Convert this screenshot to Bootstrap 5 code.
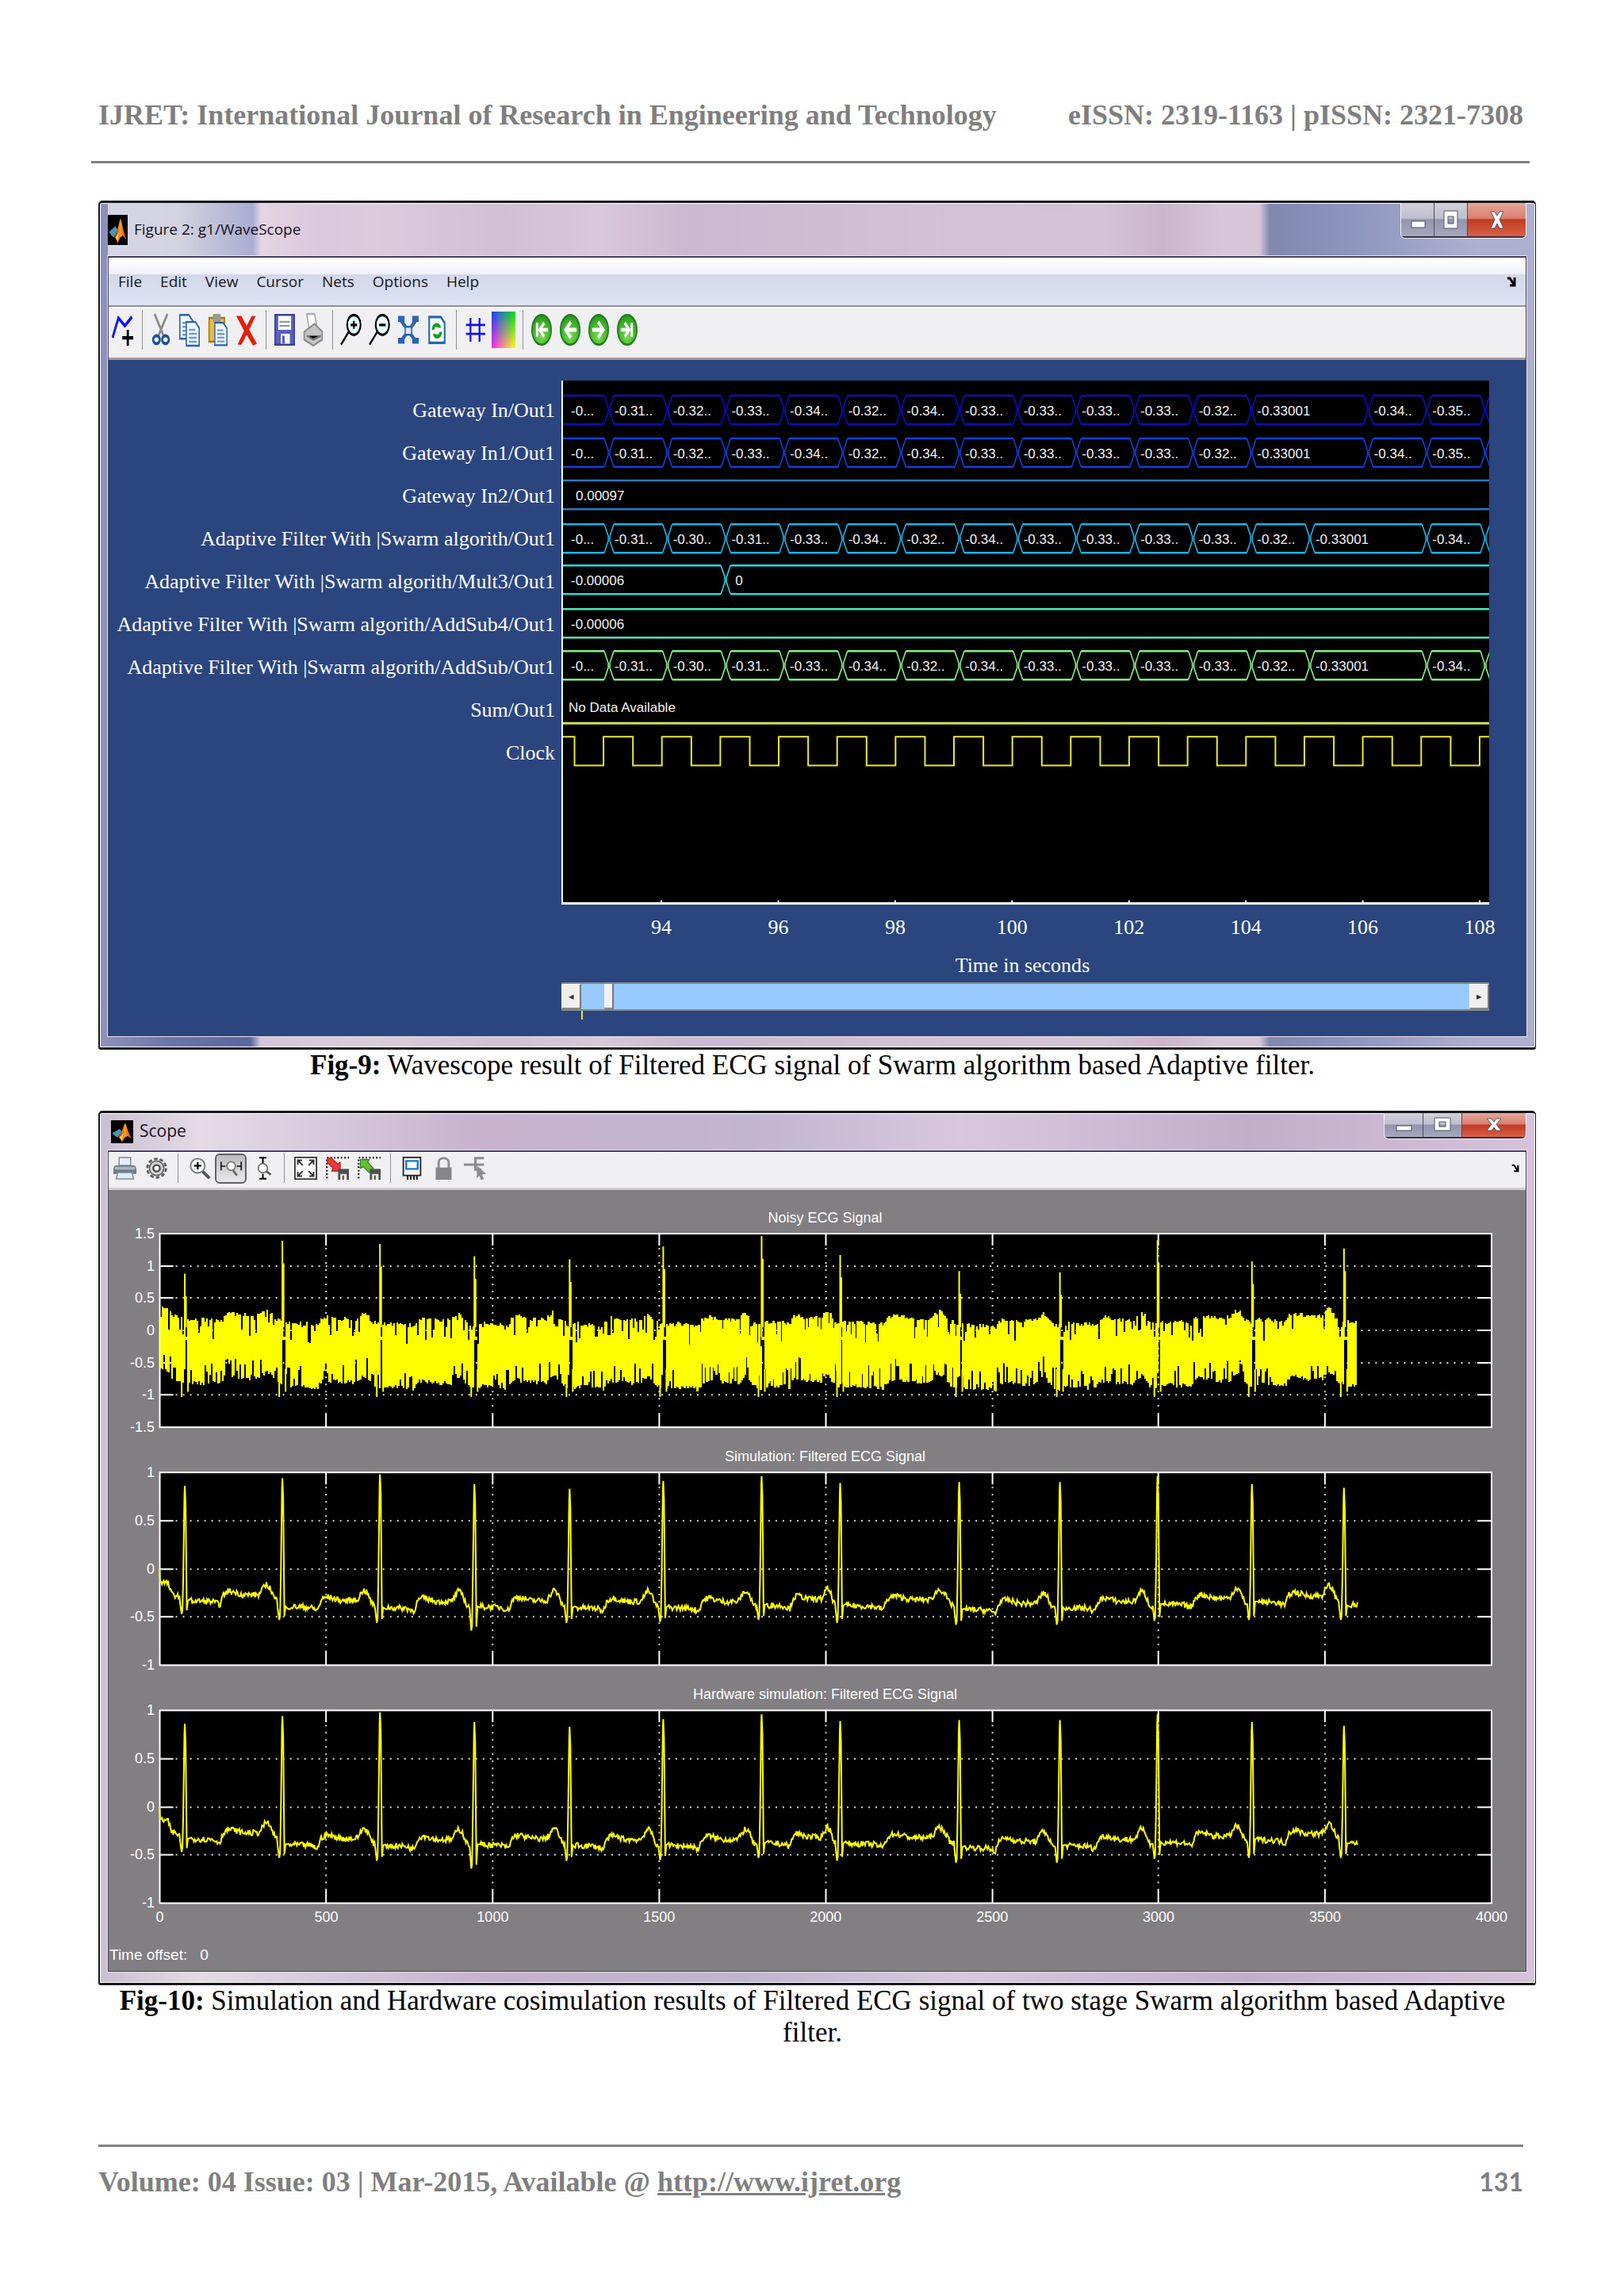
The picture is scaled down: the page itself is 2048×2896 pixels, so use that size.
<!DOCTYPE html>
<html lang="en">
<head>
<meta charset="utf-8">
<meta name="viewport" content="width=device-width, initial-scale=1">
<title>IJRET: International Journal of Research in Engineering and Technology</title>
<link href="https://cdn.jsdelivr.net/npm/bootstrap@5.3.0/dist/css/bootstrap.min.css" rel="stylesheet">
<style>
:root{--ui:"Open Sans",sans-serif}
body{background:#fff;color:#000;font-family:"Liberation Serif",serif}
.sheet{padding:125px 111px 0 124px}
.run-head{font-size:36px;line-height:40px;color:#7f7f7f;font-weight:700;padding-right:16px}
.head-rule{height:3px;background:#808080;margin:38px 8px 47px -9px}
.foot-rule{height:3px;background:#808080;margin:121px 16px 0 0}
.run-foot a{color:#7f7f7f}
.page-no{font-family:Lato,sans-serif;font-size:32px}
.caption{font-size:35px;line-height:40px;text-align:center;padding-right:12px}
.fig-gap{padding-top:37px}
.win{border:solid #15151c;border-width:3px 1px 3px 2px;border-radius:5px 5px 3px 3px;padding:0 11px 14px 10px;box-shadow:inset 0 0 0 1px #fff}
.win-wave{background:linear-gradient(90deg,#8d93bb 0,#6a74a8 5%,#5a68a0 10.5%,#d8c5dc 11.2%,#dccadd 19%,#d2bfd4 28%,#d9c7dc 35%,#ccb8d0 41%,#d4c1d7 60%,#d5c2d7 70%,#cbb5cc 74%,#d8c5da 78%,#d8c5da 80.8%,#8088b0 81.5%,#8b95bd 87%,#aeb0d2 96%)}
.win-scope{background:linear-gradient(90deg,#c9bfd2 0,#e4dbe6 7%,#d5c6db 17%,#c7b1cd 27%,#c0b5cf 45%,#d9c7df 60%,#c3aeca 80%,#d7c2dc 100%)}
.win-title{font-family:var(--ui);color:#16121c}
.win-wave .win-title{height:67px;font-size:19px;background:linear-gradient(90deg,#d4d5e5 0,#d4d3e2 5%,#a9add0 10.2%,#e4d6e4 10.8%,transparent 15%)}
.win-scope .win-title{height:47px;font-size:21px}
.win-buttons{align-self:flex-start;border:1px solid #f3f1f7;border-top:0;border-radius:0 0 6px 6px;overflow:hidden}
.win-buttons button{border:0;border-right:1px solid #4a4a5c;padding:0;background:linear-gradient(#d3d0dc 0,#c0bfce 46%,#9395ad 50%,#a7a8c0 100%);border-bottom:2px solid #30303f}
.win-buttons .btn-x{background:linear-gradient(#e5a79b 0,#da7f70 46%,#c23a24 50%,#d96046 100%);border-right:0}
.win-wave .win-buttons button{width:42px;height:44px}.win-wave .win-buttons .btn-x{width:73px}
.win-scope .win-buttons button{width:49px;height:32px}.win-scope .win-buttons .btn-x{width:80px}
.win-body{border:1px solid #46405c;border-top-width:2px;box-shadow:0 0 0 1px #e6e0ee}
.menu-row{height:62px;padding:0 12px;border-bottom:2px solid #90909c;background:linear-gradient(#fff 0,#f0f1fa 34%,#d3d9ea 36%,#dde2f4 100%);font-family:var(--ui);font-size:19px}
.menu-row button{border:0;background:none;padding:0;color:#16161c}
.menu-items{gap:23px}
.tool-row{background:#f0eff1}
.tool-row button{border:0;background:none;padding:0;display:flex;align-items:center;justify-content:center}
.tool-row i{width:1px;background:#8f8f8f;align-self:center}
.tools-a{height:67px;padding-bottom:8px;border-bottom:3px solid #a49b9b;border-top:2px solid #fff}
.tools-a button{width:36px}.tools-a svg{width:26px;height:40px}.tools-a i{height:50px;margin:0 5px 0 6px}
.tools-b{height:48px;padding-bottom:4px;border-bottom:3px solid #cfcfcf;border-top:1px solid #fff}
.tools-b button{width:40px;height:38px}.tools-b svg{width:29px;height:29px}.tools-b i{height:37px;margin:0 6px 0 7px}
.tools-b .pressed{border:2px solid #606068;border-radius:6px;background:linear-gradient(#bdbdc0,#e8e8ea)}
.tools-b .dock{width:26px}.tools-b .dock svg{width:12px;height:11px}
.tools-a .swatch{width:30px;height:46px}
.wave-area{background:#2b457f;color:#fff;padding:26px 46px 20px 0}
.net-names{font-size:26px;line-height:54px;text-align:right;padding:11px 8px 0 0;min-width:0;white-space:nowrap}
.wave-col{width:67.2%;flex:none}
svg{display:block;overflow:visible}
.wave-col svg,.scope-area>svg{width:100%;height:auto}
.time-scroll{height:36px;border-top:2px solid #7d8790;border-bottom:2px solid #7d8790;background:#99caff}
.time-scroll button{width:25px;border:1px solid #fff;border-right:2px solid #777;border-bottom:2px solid #888;background:#efefef;padding:0;font-size:13px;line-height:1;color:#333}
.time-scroll input{appearance:none;background:none;margin:0;min-width:0;height:32px}
.time-scroll input::-webkit-slider-thumb{appearance:none;width:12px;height:32px;background:#f2f2f2;border-right:2px solid #777;border-bottom:2px solid #888}
.scroll-mark{width:2px;height:11px;background:#e8e832;margin-left:25px}
.scope-area{background:#827f82;color:#fff;padding:0}
.scope-note{font-family:"Liberation Sans",sans-serif;font-size:19px;line-height:24px;padding:0 0 8px 1px}
.scope-note span{margin-left:16px}
</style>
<script src="https://cdn.jsdelivr.net/npm/bootstrap@5.3.0/dist/js/bootstrap.bundle.min.js"></script>
</head>
<body>
<svg width="0" height="0" class="position-absolute" aria-hidden="true">
<defs>
<radialGradient id="ball" cx=".5" cy=".7" r=".7"><stop offset="0" stop-color="#7be050"/><stop offset="1" stop-color="#23941c"/></radialGradient>
<linearGradient id="rain" x1="0" x2="1"><stop offset="0" stop-color="#1a3fff"/><stop offset=".4" stop-color="#2080b0"/><stop offset="1" stop-color="#00e010"/></linearGradient>
<linearGradient id="warm" x1="0" x2="1"><stop offset="0" stop-color="#ff20f0"/><stop offset="1" stop-color="#ffff20"/></linearGradient>
<linearGradient id="fade" x1="0" x2="0" y1="0" y2="1"><stop offset="0" stop-color="#fff" stop-opacity="0"/><stop offset="1" stop-color="#fff"/></linearGradient>
<mask id="low"><rect width="16" height="16" fill="url(#fade)"/></mask>
<linearGradient id="flame" x1="0" x2="1"><stop offset="0" stop-color="#7a2010"/><stop offset=".5" stop-color="#ff9a2a"/><stop offset="1" stop-color="#c84010"/></linearGradient>
<symbol id="matlab" viewBox="0 0 16 16" preserveAspectRatio="none"><path fill="#000" d="M0 0h16v16H0z"/><path fill="#3f9ab5" d="M1 9l5-3 2 2-3 4-2-1z"/><path fill="url(#flame)" d="M5 12l3-5 2-5c1 0 2 6 5 11l-3-2-2 1-2 3c-1 0-1-3-3-3z"/><path fill="#ffd23a" d="M6 12l3-3-1 5z"/></symbol>
<symbol id="page" viewBox="0 0 16 16"><path fill="#f4f9ff" stroke="#2a62ae" d="M.5.5h7l3 3v9H.5z"/><path stroke="#6a9bd2" d="M2.500 4.500h5M2.500 6.500h6M2.500 8.500h6M2.500 10.500h6"/></symbol>
</defs></svg>

<div class="sheet">
<header>
<div class="run-head d-flex justify-content-between"><span>IJRET: International Journal of Research in Engineering and Technology</span><span>eISSN: 2319-1163 | pISSN: 2321-7308</span></div>
<div class="head-rule"></div>
</header>

<main>
<figure class="mb-0">
<section class="win win-wave">
<div class="win-title d-flex align-items-center">
<svg width="25" height="38"><use href="#matlab"/></svg><span class="ms-2">Figure 2: g1/WaveScope</span>
<div class="win-buttons d-flex ms-auto">
<button aria-label="Minimize"><svg width="42" height="42"><rect x="13" y="23" width="17" height="8" fill="#fff" stroke="#555566"/></svg></button>
<button aria-label="Maximize"><svg width="42" height="42"><path fill="#fff" stroke="#555566" fill-rule="evenodd" d="M12 10h17v22H12zM17 17h7v9h-7z"/></svg></button>
<button class="btn-x" aria-label="Close"><svg width="73" height="42"><path fill="#fff" stroke="#555566" d="M29 11h5l3 5 3-5h5l-5 10 5 11h-5l-3-6-3 6h-5l5-11z"/></svg></button>
</div>
</div>
<div class="win-body">
<nav class="menu-row d-flex align-items-center"><div class="menu-items d-flex flex-grow-1"><button>File</button><button>Edit</button><button>View</button><button>Cursor</button><button>Nets</button><button>Options</button><button>Help</button></div>
<button aria-label="Dock"><svg width="12" height="13" viewBox="0 0 12 13"><path fill="none" stroke="#000" stroke-width="3" d="M1 2h3l6 9M10 1v10H4"/></svg></button></nav>
<div class="tool-row tools-a d-flex">
<button aria-label="Add net"><svg viewBox="0 0 16 16" preserveAspectRatio="none"><path fill="none" stroke="#1010ff" stroke-width="1.700" d="M0 12L4.500 2l5 4L15 1.500"/><path stroke="#000" stroke-width="1.700" d="M7.500 12h8.500M11.800 8v8"/></svg></button><i></i>
<button aria-label="Cut"><svg viewBox="0 0 16 16" preserveAspectRatio="none"><path stroke="#8c8c8c" stroke-width="1.600" d="M3 0l7 11M13 0L6 11"/><ellipse cx="4.500" cy="13" rx="2.600" ry="2" fill="none" stroke="#1c4f9e" stroke-width="1.600"/><ellipse cx="11.500" cy="13" rx="2.600" ry="2" fill="none" stroke="#1c4f9e" stroke-width="1.600"/></svg></button>
<button aria-label="Copy"><svg viewBox="0 0 16 16" preserveAspectRatio="none"><use href="#page" width="16" height="16"/><use href="#page" x="5" y="3.500" width="16" height="16"/></svg></button>
<button aria-label="Paste"><svg viewBox="0 0 16 16" preserveAspectRatio="none"><path fill="#e9bd3b" stroke="#a77716" d="M1 2h12v12H1z"/><path fill="#9a9a94" d="M4 0h6v4H4z"/><use href="#page" x="5" y="4" width="15" height="15"/></svg></button>
<button aria-label="Delete"><svg viewBox="0 0 16 16" preserveAspectRatio="none"><path fill="#e3200f" d="M0 1l4-0 4 5 4-5h3l-5 7 6 7-3 1-5-5.500-4 5H1l5-7z"/></svg></button><i></i>
<button aria-label="Save"><svg viewBox="0 0 16 16" preserveAspectRatio="none"><path fill="#5a5fb8" stroke="#38418f" d="M.5.500h15v15H.5z"/><path fill="#fff" d="M3 1h10v7H3zM5 10h7v5H5z"/><path stroke="#999" d="M4 4h8M4 6h8"/><path fill="#5a5fb8" d="M6 11h2v4H6z"/></svg></button>
<button aria-label="Print"><svg viewBox="0 0 16 16" preserveAspectRatio="none"><path fill="#fff" stroke="#aaa" d="M3 0h6l2 7-6 1z"/><path fill="#c5c5c5" stroke="#8b8b8b" d="M1 9l8-4 6 4v4l-7 3-7-3z"/><path stroke="#777" d="M3 11l5 2 6-2"/></svg></button><i></i>
<button aria-label="Zoom in"><svg viewBox="0 0 16 16" preserveAspectRatio="none"><ellipse cx="10" cy="5.500" rx="5.200" ry="5" fill="#e8ffff" stroke="#000" stroke-width="1.300"/><path stroke="#000" stroke-width="1.300" d="M7.500 5.500h5M10 3.500v4M6 9l-6 6.500"/></svg></button>
<button aria-label="Zoom out"><svg viewBox="0 0 16 16" preserveAspectRatio="none"><ellipse cx="10" cy="5.500" rx="5.200" ry="5" fill="#e8ffff" stroke="#000" stroke-width="1.300"/><path stroke="#000" stroke-width="1.300" d="M7.500 5.500h5M6 9l-6 6.500"/></svg></button>
<button aria-label="Fit"><svg viewBox="0 0 16 16" preserveAspectRatio="none"><path stroke="#2d63b0" stroke-width="2.200" d="M2 3l12 11M14 3L2 14"/><path fill="#2d63b0" d="M0 1h5v3H0zM11 1h5v3h-5zM0 12h5v3H0zM11 12h5v3h-5z"/><path fill="#dfeaf8" stroke="#2d63b0" d="M5.500 6.500h5v4h-5z"/></svg></button>
<button aria-label="Refresh"><svg viewBox="0 0 16 16" preserveAspectRatio="none"><path fill="#fff" stroke="#2467b0" stroke-width="1.300" d="M2 1.500h9l3 3v10H2z"/><path fill="none" stroke="#10a020" stroke-width="2" d="M5 8c0-3 5-3 5-1M11 9c0 3-5 3-5 1"/></svg></button><i></i>
<button aria-label="Grid"><svg viewBox="0 0 16 16" preserveAspectRatio="none"><path stroke="#1010f0" stroke-width="1.100" d="M1 5.500h15M1 10h15"/><path stroke="#1010f0" stroke-width="1.400" d="M4.500 2v12M11.500 2v12"/></svg></button>
<button aria-label="Colors"><svg class="swatch" viewBox="0 0 16 16" preserveAspectRatio="none"><path fill="url(#rain)" d="M0 0h16v16H0z"/><path fill="url(#warm)" mask="url(#low)" d="M0 0h16v16H0z"/></svg></button><i></i>
<button aria-label="First"><svg viewBox="0 0 16 16" preserveAspectRatio="none"><ellipse cx="8" cy="8" rx="7.500" ry="7.500" fill="url(#ball)" stroke="#1f7d1a"/><path fill="none" stroke="#fff" stroke-width="1.800" d="M4.500 4.500v7M13 8H7M10 4.500L6.500 8l3.500 3.500"/></svg></button>
<button aria-label="Previous"><svg viewBox="0 0 16 16" preserveAspectRatio="none"><ellipse cx="8" cy="8" rx="7.500" ry="7.500" fill="url(#ball)" stroke="#1f7d1a"/><path fill="none" stroke="#fff" stroke-width="2" d="M13 8H5M8.500 4L4.500 8l4 4"/></svg></button>
<button aria-label="Next"><svg viewBox="0 0 16 16" preserveAspectRatio="none"><ellipse cx="8" cy="8" rx="7.500" ry="7.500" fill="url(#ball)" stroke="#1f7d1a"/><path fill="none" stroke="#fff" stroke-width="2" d="M3 8h8M7.500 4l4 4-4 4"/></svg></button>
<button aria-label="Last"><svg viewBox="0 0 16 16" preserveAspectRatio="none"><ellipse cx="8" cy="8" rx="7.500" ry="7.500" fill="url(#ball)" stroke="#1f7d1a"/><path fill="none" stroke="#fff" stroke-width="1.800" d="M11.500 4.500v7M3 8h6M6 4.500L9.500 8 6 11.500"/></svg></button>
</div>
<div class="wave-area d-flex">
<div class="net-names flex-grow-1"><div>Gateway In/Out1</div><div>Gateway In1/Out1</div><div>Gateway In2/Out1</div><div>Adaptive Filter With |Swarm algorith/Out1</div><div>Adaptive Filter With |Swarm algorith/Mult3/Out1</div><div>Adaptive Filter With |Swarm algorith/AddSub4/Out1</div><div>Adaptive Filter With |Swarm algorith/AddSub/Out1</div><div>Sum/Out1</div><div>Clock</div></div>
<div class="wave-col">
<svg id="waves" viewBox="708 480 1169 758" role="img" aria-label="Wave scope"></svg>
<div class="time-scroll d-flex"><button aria-label="Scroll left">◂</button><input class="flex-grow-1" type="range" min="0" max="1000" value="26" aria-label="Time"><button aria-label="Scroll right">▸</button></div>
<div class="scroll-mark"></div>
</div>
</div>
</div>
</section>
<figcaption class="caption"><b>Fig-9:</b> Wavescope result of Filtered ECG signal of Swarm algorithm based Adaptive filter.</figcaption>
</figure>

<figure class="mb-0 fig-gap">
<section class="win win-scope">
<div class="win-title d-flex align-items-center">
<svg width="28" height="29" class="ms-1"><use href="#matlab"/></svg><span class="ms-2">Scope</span>
<div class="win-buttons d-flex ms-auto">
<button aria-label="Minimize"><svg width="48" height="30"><rect x="15" y="16" width="19" height="6" fill="#fff" stroke="#555566"/></svg></button>
<button aria-label="Maximize"><svg width="48" height="30"><path fill="#fff" stroke="#555566" fill-rule="evenodd" d="M14 6h20v16H14zM20 11h8v6h-8z"/></svg></button>
<button class="btn-x" aria-label="Close"><svg width="80" height="30"><path fill="#fff" stroke="#555566" d="M31 7h6l3 4 3-4h6l-6 7 6 8h-6l-3-4-3 4h-6l6-8z"/></svg></button>
</div>
</div>
<div class="win-body">
<div class="tool-row tools-b d-flex align-items-center">
<button aria-label="Print"><svg viewBox="0 0 16 16"><path fill="#e8eef5" stroke="#7d8b9b" stroke-width=".8" d="M4 .500h8V6H4z"/><path fill="#6f7c8b" d="M1 6h14l1 2v4H0V8z"/><path fill="#aab4bf" d="M1 7h14v2H1z"/><path fill="#e3eefb" stroke="#7d8b9b" stroke-width=".8" d="M3 11h10l1 4.500H2z"/></svg></button>
<button aria-label="Parameters"><svg viewBox="0 0 16 16"><circle cx="8" cy="8" r="6.500" fill="none" stroke="#5e5e5e" stroke-width="1.600" stroke-dasharray="2.500 1.580"/><circle cx="8" cy="8" r="5" fill="#d8d8d8" stroke="#666"/><circle cx="8" cy="8" r="2.300" fill="#fff" stroke="#4a4a4a" stroke-width="1.300"/></svg></button><i></i>
<button aria-label="Zoom"><svg viewBox="0 0 16 16"><path stroke="#555" stroke-width="2.200" d="M10 10l5 5"/><circle cx="6.800" cy="6.300" r="5" fill="#f2f7fa" stroke="#777"/><path stroke="#000" stroke-width="1.300" d="M4.300 6.300h5M6.800 3.800v5"/></svg></button>
<button class="pressed" aria-label="Zoom X-axis"><svg viewBox="0 0 16 16"><path stroke="#666" stroke-width="1.500" d="M9 9l3 4"/><circle cx="8" cy="6.500" r="3" fill="#f6fafc" stroke="#777"/><path fill="none" stroke="#222" d="M1 3.500v6M15 3.500v6M1 6.500h3M15 6.500h-3"/></svg></button>
<button aria-label="Zoom Y-axis"><svg viewBox="0 0 16 16"><path stroke="#555" stroke-width="1.500" d="M9.500 9.500l4 3"/><circle cx="8" cy="8" r="3.200" fill="#f6fafc" stroke="#777"/><path stroke="#000" stroke-width="1.100" d="M5.500.700h5M5.500 15.300h5M8 1v3.500M8 12v3"/></svg></button><i></i>
<button aria-label="Autoscale"><svg viewBox="0 0 16 16"><path fill="#fff" stroke="#333" d="M.5.500h15v15H.5z"/><path fill="none" stroke="#333" stroke-width="1.100" d="M2.500 5.500v-3h3m-3 0l3.500 3.500M13.500 5.500v-3h-3m3 0L10 6M2.500 10.500v3h3m-3 0L6 10M13.500 10.500v3h-3m3 0L10 10"/></svg></button>
<button aria-label="Save axes"><svg viewBox="0 0 16 16"><path fill="none" stroke="#222" stroke-width="1.400" stroke-dasharray="1 1.400" d="M.7 15V.7H16"/><path fill="#ee3838" stroke="#b01818" stroke-width=".6" d="M1 1h3l4 4 2-1v6H4l1-2-4-4z"/><path fill="#4e4e4e" d="M8.500 8.500H16V16H8.500z"/><path fill="#e8e8e8" d="M10 12h4.500v4H10z"/><path fill="#444" d="M11.500 13h1v3h-1z"/></svg></button>
<button aria-label="Restore axes"><svg viewBox="0 0 16 16"><path fill="none" stroke="#222" stroke-width="1.400" stroke-dasharray="1 1.400" d="M.7 15V.7H16"/><path fill="#64c030" stroke="#2e7d12" stroke-width=".6" d="M2 2h6L7 4l4 4-3 3-4-4-2 1z"/><path fill="#4e4e4e" d="M8.500 8.500H16V16H8.500z"/><path fill="#e8e8e8" d="M10 12h4.500v4H10z"/><path fill="#444" d="M11.500 13h1v3h-1z"/></svg></button><i></i>
<button aria-label="Floating scope"><svg viewBox="0 0 16 16"><path fill="#f4f4f4" stroke="#222" d="M2 .500h12v12.500H2z"/><path fill="#fff" stroke="#1879c8" stroke-width="1.300" d="M4 3h8v5.500H4z"/><path stroke="#222" stroke-width="1.200" d="M5 13v3M7.200 13v3M9.400 13v3M11.500 13v3"/></svg></button>
<button aria-label="Lock"><svg viewBox="0 0 16 16"><path fill="none" stroke="#8d8d8d" stroke-width="1.600" d="M4.500 8V4c0-4 7-4 7 0v4"/><path fill="#868686" d="M2.500 7.500h11V16h-11z"/></svg></button>
<button aria-label="Signal selector"><svg viewBox="0 0 16 16"><path fill="none" stroke="#8d8d8d" stroke-width="1.700" d="M0 5.500h14M14 1H8v8h4"/><path fill="#8d8d8d" d="M9 6l6.500 6-3 .5 1.500 3-2 .8-1.300-3L9 15z"/></svg></button>
<button class="dock ms-auto" aria-label="Dock"><svg viewBox="0 0 12 13"><path fill="none" stroke="#000" stroke-width="2.500" d="M1 2h3l6 9M10 2v9H4"/></svg></button>
</div>
<div class="scope-area">
<svg id="scopes" viewBox="137 1502 1786 953" role="img" aria-label="ECG scope"></svg>
<div class="scope-note">Time offset:<span>0</span></div>
</div>
</div>
</section>
<figcaption class="caption"><b>Fig-10:</b> Simulation and Hardware cosimulation results of Filtered ECG signal of two stage Swarm algorithm based Adaptive filter.</figcaption>
</figure>
</main>

<footer>
<div class="foot-rule"></div>
<div class="run-head run-foot d-flex justify-content-between align-items-center pt-4"><span>Volume: 04 Issue: 03 | Mar-2015, Available @ <a href="http://www.ijret.org">http://www.ijret.org</a></span><span class="page-no">131</span></div>
</footer>
</div>

<script>
// ---- wave scope ----
(function(){
  const L=708,R=1877,step=73.6,first=768;
  let s=`<rect x="${L}" y="480" width="${R-L}" height="658" fill="#000"/><clipPath id="wc"><rect x="${L}" y="480" width="${R-L}" height="660"/></clipPath><g clip-path="url(#wc)" fill="none" stroke-width="2.500">`;
  let t='<g fill="#f2f2f2" font-family="Liberation Sans, sans-serif" font-size="17">';
  const a=['-0...','-0.31..','-0.32..','-0.33..','-0.34..','-0.32..','-0.34..','-0.33..','-0.33..','-0.33..','-0.33..','-0.32..','-0.33001',null,'-0.34..','-0.35..',''];
  const b=['-0...','-0.31..','-0.30..','-0.31..','-0.33..','-0.34..','-0.32..','-0.34..','-0.33..','-0.33..','-0.33..','-0.33..','-0.32..','-0.33001',null,'-0.34..',''];
  // index 0 ends at the first crossing; null keeps the former value
  function bus(y,c,vals){
    let x0=L-8;
    vals.forEach((v,i)=>{
      if(v!==null){const tx=i===0?720:first+(i-1)*step+7;t+=`<text x="${tx}" y="${y+25}">${v}</text>`;}
      if(vals[i+1]===null)return;
      const x=first+i*step;
      s+=`<path stroke="${c}" d="M${x0+6} ${y}H${x-6}M${x0+6} ${y+36}H${x-6}"/><path stroke="${c}" stroke-width="1.600" d="M${x-6} ${y}L${x-1} ${y+15}V${y+21}L${x-6} ${y+36}M${x+6} ${y}L${x+1} ${y+15}V${y+21}L${x+6} ${y+36}"/>`;
      x0=x;
    });
  }
  function flat(y,c,v,x){s+=`<path stroke="${c}" d="M${L} ${y}H${R}M${L} ${y+36}H${R}"/>`;t+=`<text x="${x}" y="${y+25}">${v}</text>`;}
  bus(499,'#0c0cc0',a);bus(553,'#1040dc',a);
  flat(606,'#2d78bb','0.00097',726);
  bus(661,'#18b4ea',b);
  s+=`<path stroke="#20dce8" d="M${L} 713H909M921 713H${R}M${L} 749H909M921 749H${R}"/><path stroke="#20dce8" stroke-width="1.600" d="M909 713L914 728V734L909 749M921 713L916 728V734L921 749"/>`;
  t+='<text x="720" y="738">-0.00006</text><text x="927" y="738">0</text>';
  flat(768,'#4ce8bc','-0.00006',720);
  bus(821,'#86f286',b);
  s+=`<path stroke="#cfe64a" stroke-width="3" d="M${L} 912H${R}"/>`;
  t+='<text x="717" y="898">No Data Available</text></g>';
  let d=`M${L} 929`;
  for(let k=0;k<17;k++){const f=724.5+k*step;d+=`H${f}V965H${f+36.500}V929`;}
  s+=`<path stroke="#eaea28" stroke-width="2" d="${d}"/></g>`;
  s+=`<path stroke="#fff" stroke-width="2" fill="none" d="M709 480V1139"/><path stroke="#fff" stroke-width="3" d="M708 1139H1877"/>`;
  let u='<g fill="#fff" text-anchor="middle" font-family="Liberation Serif, serif" font-size="26">';
  for(let i=0;i<8;i++){const x=834+i*147.3;s+=`<path stroke="#fff" stroke-width="2" d="M${x} 1135v4"/>`;u+=`<text x="${x}" y="1177">${94+2*i}</text>`;}
  u+='<text x="1289" y="1225">Time in seconds</text></g>';
  document.getElementById('waves').innerHTML=s+t+u;
})();
// ---- ECG scope ----
(function(){
  let seed=7;const rnd=()=>{seed=(seed*16807)%2147483647;return seed/2147483647;};
  const L=201.500,R=1880;
  const beats=[233,356,479,598,718,836,960,1059,1209,1336,1459,1578,1694];
  const peak=[.86,.94,.98,.88,.83,.91,.96,.89,.90,.90,.96,.88,.84];
  const dip=[-.47,-.53,-.56,-.64,-.56,-.55,-.53,-.56,-.58,-.58,-.54,-.53,-.53];
  const npk=[.88,1.39,1.34,1.15,1.10,1.30,1.46,1.17,.92,.90,1.40,1.07,1.27];
  const base=[-.33,-.39,-.40,-.39,-.40,-.40,-.375,-.38,-.42,-.40,-.365,-.34,-.38];
  const shape=[[0,0],[.28,-.01],[.36,-.04],[.4,.07],[.46,.1],[.6,.06],[.76,.06],[.83,.17],[.87,.14],[.92,.02],[1,-.02]];
  function wave(x){
    if(x<beats[0]){const p=[[201,-.02],[202,-.13],[212,-.15],[216,-.26],[226,-.29],[233,-.36]];for(let i=1;i<p.length;i++)if(x<=p[i][0])return p[i-1][1]+(p[i][1]-p[i-1][1])*(x-p[i-1][0])/(p[i][0]-p[i-1][0]);return -.36;}
    let k=0;while(k<12&&x>=beats[k+1])k++;
    const w=(beats[k+1]||beats[k]+118)-beats[k],f=(x-beats[k])/w;
    if(k===12)return base[k]+(f<.08?0:.03*Math.min(1,f));
    for(let i=1;i<shape.length;i++)if(f<=shape[i][0]){const q=shape[i-1],r=shape[i];return base[k]+q[1]+(r[1]-q[1])*(f-q[0])/(r[0]-q[0]);}
    return base[k];
  }
  function near(x){return beats.findIndex(b=>Math.abs(b-x)<=6);}
  function axes(top,h,vals,lo,hi,title){
    const Y=v=>top+h*(hi-v)/(hi-lo);
    let s=`<rect x="${L}" y="${top}" width="${R-L}" height="${h}" fill="#000" stroke="#fff" stroke-width="2"/>`,t='';
    for(let i=1;i<8;i++){const x=Math.round(L+i*(R-L)/8);s+=`<path stroke="#fff" stroke-width="2" d="M${x} ${top}v15M${x} ${top+h}v-18"/><path stroke="#ddd" stroke-width="2" stroke-dasharray="2 7" d="M${x} ${top+18}V${top+h-20}"/>`;}
    vals.forEach(v=>{const y=Math.round(Y(v));t+=`<text x="195" y="${y+6}" text-anchor="end">${v}</text>`;
      if(v>lo&&v<hi)s+=`<path stroke="#fff" stroke-width="2" d="M${L} ${y}h17M${R} ${y}h-18"/><path stroke="#ddd" stroke-width="2" stroke-dasharray="2 7" d="M${L+20} ${y}H${R-20}"/>`;});
    t+=`<text x="1040" y="${top-14}" text-anchor="middle">${title}</text>`;
    return [s,t,Y];
  }
  const line=d=>`<path fill="none" stroke="#ffff00" stroke-width="2" d="${d}"/>`;
  let out='',txt='';
  // noisy trace
  let [s,t,Y]=axes(1557,244,[1.5,1,.5,0,-.5,-1,-1.5],-1.5,1.5,'Noisy ECG Signal');
  let d='';
  for(let x=203;x<1711;x+=2){
    const v=wave(x),g=rnd(),at=beats.some(b=>Math.abs(b+2-x)<=1);
    let hi=v+.54-rnd()*.07,lo=v-.44-rnd()*.07;
    if(g<.17)hi-=.08+rnd()*.24;else if(g>.74)lo+=.08+rnd()*.24;
    if(at){hi=-.1;lo=-.15}
    d+=`M${x} ${Y(hi).toFixed(1)}V${Y(lo).toFixed(1)}`;
  }
  let spikes='';
  beats.forEach((b,i)=>{spikes+=`M${b} ${Y(npk[i])}V${Y(-.1)}M${b+1.500} ${Y(npk[i]-.35)}V${Y(.05)}M${b-4} ${Y(-.6)}V${Y(-1.03)}M${b+4} ${Y(-.6)}V${Y(-.95)}`;});
  out+=s+`<path fill="none" stroke="#ffff00" stroke-width="2.200" shape-rendering="crispEdges" d="${d}"/>`+line(spikes);txt+=t;
  // filtered traces
  [[1858,'Simulation: Filtered ECG Signal'],[2158,'Hardware simulation: Filtered ECG Signal']].forEach(([top,title])=>{
    let [s,t,Y]=axes(top,243,[1,.5,0,-.5,-1],-1,1,title);
    let d='M201 '+Y(0);
    for(let x=202;x<1711;x+=1.1){
      const k=near(x);
      if(k>=0){const b=beats[k];
        d+=`L${b-6} ${Y(base[k]-.02)}L${b-4} ${Y(dip[k])}L${b-3} ${Y(dip[k]+.04)}L${b-2} ${Y(-.1)}L${b-.5} ${Y(peak[k]-.1)}L${b} ${Y(peak[k])}L${b+1} ${Y(peak[k]-.2)}L${b+2.500} ${Y(dip[k]+.04)}L${b+4} ${Y(base[k])}`;
        x=b+6;continue;}
      d+=`L${x.toFixed(1)} ${Y(wave(x)+(rnd()-.5)*.06).toFixed(1)}`;
    }
    out+=s+line(d);txt+=t;
  });
  for(let i=0;i<=8;i++)txt+=`<text x="${L+i*(R-L)/8}" y="2424" text-anchor="middle">${i*500}</text>`;
  document.getElementById('scopes').innerHTML=out+`<g fill="#fff" font-family="Liberation Sans, sans-serif" font-size="18">${txt}</g>`;
})();
</script>
</body>
</html>
